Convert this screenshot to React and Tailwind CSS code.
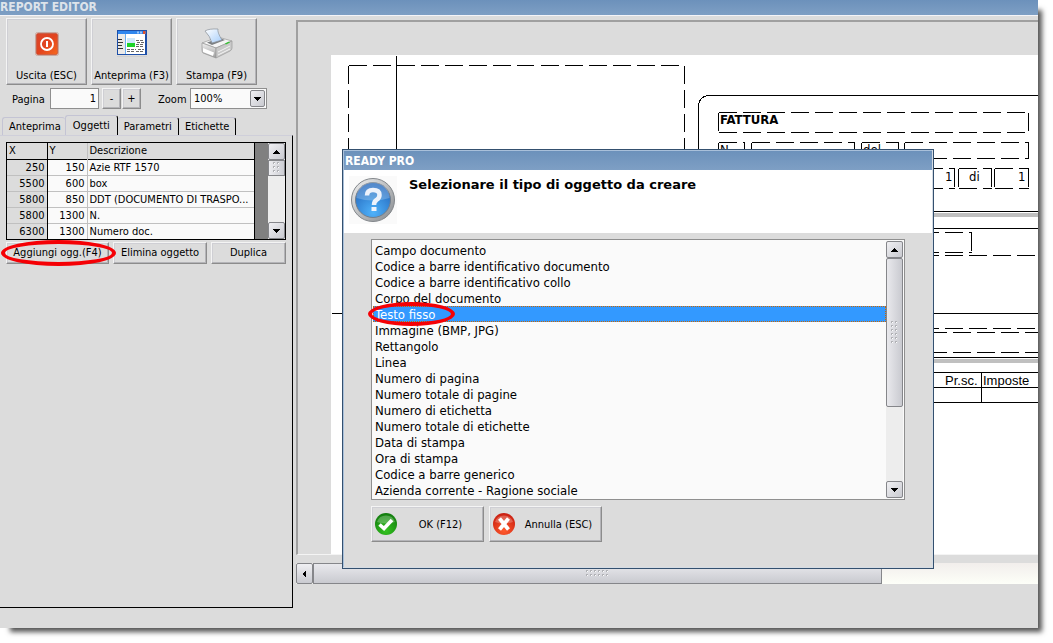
import { useState } from 'react';

const objects = [
  { x: 250, y: 150, descr: 'Azie RTF 1570' },
  { x: 5500, y: 600, descr: 'box' },
  { x: 5800, y: 850, descr: 'DDT (DOCUMENTO DI TRASPO...' },
  { x: 5800, y: 1300, descr: 'N.' },
  { x: 6300, y: 1300, descr: 'Numero doc.' },
];

const types = [
  'Campo documento',
  'Codice a barre identificativo documento',
  'Codice a barre identificativo collo',
  'Corpo del documento',
  'Testo fisso',
  'Immagine (BMP, JPG)',
  'Rettangolo',
  'Linea',
  'Numero di pagina',
  'Numero totale di pagine',
  'Numero di etichetta',
  'Numero totale di etichette',
  'Data di stampa',
  'Ora di stampa',
  'Codice a barre generico',
  'Azienda corrente - Ragione sociale',
];

const tabs = ['Anteprima', 'Oggetti', 'Parametri', 'Etichette'];

const raised = 'border border-t-[#f4f4f4] border-l-[#f4f4f4] border-r-[#8c8c8c] border-b-[#8c8c8c] shadow-[inset_-1px_-1px_0_#b4b4b8,inset_1px_1px_0_#cfcfd4] bg-[#dcdcdc]';

function PowerIcon() {
  return (
    <svg width="24" height="24" viewBox="0 0 24 24">
      <defs>
        <linearGradient id="pw" x1="0" y1="0" x2="1" y2="1">
          <stop offset="0" stopColor="#d9462c" />
          <stop offset="0.5" stopColor="#e2431e" />
          <stop offset="1" stopColor="#f6691f" />
        </linearGradient>
      </defs>
      <rect x="0.5" y="0.5" width="23" height="23" rx="2" fill="#f4e4e0" stroke="#c9a79f" />
      <rect x="1.5" y="1.5" width="21" height="21" rx="1.5" fill="url(#pw)" stroke="#b93a1e" strokeWidth="0.6" />
      <circle cx="12" cy="12" r="6" fill="none" stroke="#fff" strokeWidth="1.8" />
      <path d="M12 9v6" stroke="#fff" strokeWidth="2" />
    </svg>
  );
}

function PreviewIcon() {
  return (
    <svg width="32" height="28" viewBox="0 0 32 28">
      <rect x="1" y="0" width="30" height="25" fill="#1d4fa8" />
      <rect x="2" y="1" width="28" height="3" fill="#2f86ee" />
      <path d="M21 1.5h2v2h-2zM24 1.5h2v2h-2z" fill="#9cc6f8" />
      <path d="M27 1h2.500v3h-2.500z" fill="#e0512c" />
      <rect x="2" y="4" width="27" height="20" fill="#fff" />
      <rect x="2" y="4" width="7" height="20" fill="#eceae8" />
      <path d="M9.500 4v20" stroke="#6aaef0" />
      <path d="M2 9.500h4M2 12.500h5M2 15.500h4M2 18.500h5" stroke="#333" />
      <rect x="11" y="8" width="8" height="5" fill="#cfe8fb" />
      <rect x="11" y="13" width="8" height="4" fill="#1fd32a" />
      <path d="M20 10.500h8M21 12.500h7M20 14.500h8M20 16.500h7M11 19.500h9M22 19.500h6M11 21.500h7M20 21.500h8" stroke="#666" strokeDasharray="3 1" />
      <rect x="1" y="26" width="30" height="1" fill="#d0d0d0" />
    </svg>
  );
}

function PrinterIcon() {
  return (
    <svg width="32" height="32" viewBox="0 0 32 32">
      <defs>
        <linearGradient id="paper" x1="0" y1="0" x2="1" y2="1">
          <stop offset="0" stopColor="#fff" />
          <stop offset="1" stopColor="#a6cdfa" />
        </linearGradient>
        <linearGradient id="side" x1="0" y1="0" x2="0" y2="1">
          <stop offset="0" stopColor="#f2f2f2" />
          <stop offset="1" stopColor="#9b9b9b" />
        </linearGradient>
      </defs>
      <path d="M1 15 L17 9 L31 13 L15 20 Z" fill="#f5f5f5" stroke="#9a9a9a" strokeWidth="0.7" />
      <path d="M6 14.500 L19 10 L24 12 L11 17 Z" fill="#7d8083" />
      <path d="M4 3 Q8 .5 17 1 Q16 4 21 12 L11 15 Q9 8 4 3 Z" fill="url(#paper)" stroke="#8a9099" strokeWidth="0.7" />
      <path d="M1 15 L15 20 V30 L2 25 Q1 24 1 22 Z" fill="url(#side)" stroke="#9a9a9a" strokeWidth="0.7" />
      <path d="M15 20 L31 13 V20 Q31 22 29 23 L15 30 Z" fill="#c9c9c9" stroke="#9a9a9a" strokeWidth="0.7" />
      <path d="M2 20 L13 24.500 L12 28 L2 24 Z" fill="#fff" />
      <path d="M17 24 L29 18 M17 27 L29 21" stroke="#f4f4f4" />
      <path d="M24 15.500 L28 13.500 L29 14.500 L25 16.500 Z" fill="#35c431" />
    </svg>
  );
}

function QuestionIcon() {
  return (
    <svg width="48" height="48" viewBox="0 0 48 48">
      <defs>
        <linearGradient id="ring" x1="0" y1="0" x2="1" y2="1">
          <stop offset="0" stopColor="#f2f2f2" />
          <stop offset="1" stopColor="#85898d" />
        </linearGradient>
        <radialGradient id="ball" cx="0.5" cy="0.85" r="0.8">
          <stop offset="0" stopColor="#4fb2fa" />
          <stop offset="1" stopColor="#2468bd" />
        </radialGradient>
      </defs>
      <rect width="48" height="48" fill="#fafafa" />
      <circle cx="24" cy="24" r="21.500" fill="url(#ring)" stroke="#83878b" />
      <circle cx="24" cy="24" r="17.500" fill="url(#ball)" stroke="#747e8a" />
      <path d="M7.500 22 A16.500 16.500 0 0 1 40.500 22 Q24 27 7.500 22Z" fill="#fff" opacity="0.22" />
      <path d="M18 19.500 Q18 14 24 14 Q30.500 14 30.500 19 Q30.500 22 27.500 24 Q25 25.500 25 29" fill="none" stroke="#eef2fb" strokeWidth="4.500" />
      <rect x="22.500" y="31" width="5" height="4" fill="#eef2fb" />
    </svg>
  );
}

function OkIcon() {
  return (
    <svg width="24" height="24" viewBox="0 0 24 24">
      <defs>
        <radialGradient id="ok" cx="0.5" cy="0.8" r="0.8">
          <stop offset="0" stopColor="#35c420" />
          <stop offset="1" stopColor="#117a0e" />
        </radialGradient>
      </defs>
      <circle cx="12" cy="12" r="11" fill="url(#ok)" />
      <path d="M3 10 A9.500 9.500 0 0 1 21 10 Q12 13 3 10Z" fill="#fff" opacity="0.25" />
      <path d="M5.500 12.500 L10 16.500 L18 8" fill="none" stroke="#fff" strokeWidth="3.600" />
    </svg>
  );
}

function CancelIcon() {
  return (
    <svg width="24" height="24" viewBox="0 0 24 24">
      <defs>
        <radialGradient id="ko" cx="0.5" cy="0.8" r="0.8">
          <stop offset="0" stopColor="#ff5a2c" />
          <stop offset="1" stopColor="#c81d10" />
        </radialGradient>
      </defs>
      <circle cx="12" cy="12" r="11" fill="url(#ko)" />
      <path d="M3 10 A9.500 9.500 0 0 1 21 10 Q12 13 3 10Z" fill="#fff" opacity="0.25" />
      <path d="M7.500 6.500 L16.500 17.500 M16.500 6.500 L7.500 17.500" stroke="#fff" strokeWidth="3.800" />
    </svg>
  );
}

function Arrow({ d }) {
  return (
    <svg width="8" height="8" viewBox="0 0 8 8" shapeRendering="crispEdges">
      <path d={d} fill="#000" />
    </svg>
  );
}

const UP = 'M0 6h7L3.500 2z';
const DOWN = 'M0 2h7L3.500 6z';
const LEFT = 'M5 0v8L1 4z';

function ScrollButton({ d, label }) {
  return (
    <button aria-label={label} className="flex size-[17px] shrink-0 items-center justify-center rounded-[2px] border border-[#85868a] bg-linear-to-br from-[#f0f0f3] to-[#c9cad0]">
      <Arrow d={d} />
    </button>
  );
}

function Grip({ cols, rows }) {
  const dots = [];
  for (let r = 0; r < rows; r++) {
    for (let c = 0; c < cols; c++) dots.push([c * 4, r * 4]);
  }
  return (
    <svg width={cols * 4} height={rows * 4} shapeRendering="crispEdges">
      {dots.map(([x, y]) => (
        <g key={`${x}-${y}`}>
          <rect x={x + 1} y={y + 1} width="1" height="1" fill="#fff" />
          <rect x={x} y={y} width="2" height="1" fill="#b0b1b5" />
          <rect x={x} y={y} width="1" height="2" fill="#b0b1b5" />
        </g>
      ))}
    </svg>
  );
}

function ToolButton({ icon, label }) {
  return (
    <button className={`flex h-[67px] w-[81px] flex-col items-center justify-between pt-[9px] ${raised}`}>
      <span className="flex h-8 items-center">{icon}</span>
      <span className="leading-4 whitespace-nowrap">{label}</span>
    </button>
  );
}

function DashedBox({ x, y, x2, y2 }) {
  return <path d={`M${x} ${y}H${x2} M${x} ${y2}H${x2} M${x} ${y}V${y2} M${x2} ${y}V${y2}`} strokeDasharray="18 6" />;
}

function ReportPage() {
  return (
    <div className="relative h-full min-w-0 overflow-hidden bg-white text-[13px] leading-4">
      <svg className="absolute top-0 left-0" width="707" height="499" fill="none" stroke="#000" shapeRendering="crispEdges">
        <g transform="translate(0.5 0.5)">
          <path d="M65 0V499 M0 258H707" />
          <DashedBox x={17} y={10} x2={353} y2={240} />
          <path d="M720 40H377Q367 41 367 51V156H720" />
          <DashedBox x={387} y={57} x2={697} y2={77} />
          <DashedBox x={387} y={87} x2={413} y2={103} />
          <DashedBox x={420} y={87} x2={523} y2={103} />
          <DashedBox x={530} y={87} x2={567} y2={103} />
          <DashedBox x={573} y={87} x2={697} y2={103} />
          <DashedBox x={569} y={113} x2={623} y2={133} />
          <DashedBox x={627} y={113} x2={660} y2={133} />
          <DashedBox x={663} y={113} x2={697} y2={133} />
          <path d="M371 159H720" stroke="#c0c0c0" strokeWidth="4" />
          <path d="M367 173H720" />
          <DashedBox x={397} y={177} x2={640} y2={197} />
          <path d="M397 200H707 M397 273H707 M381 277H720 M381 297H720" strokeDasharray="18 6" />
          <path d="M371 305H720" stroke="#c0c0c0" strokeWidth="4" />
          <path d="M367 302H720 M367 317H720 M367 332H720 M367 347H720 M650 317V347" />
        </g>
      </svg>
      <span className="absolute top-[57px] left-[389px] font-bold">FATTURA</span>
      <span className="absolute top-[87px] left-[389px]">N.</span>
      <span className="absolute top-[87px] left-[532px]">del</span>
      <span className="absolute top-[114px] left-[614px]">1</span>
      <span className="absolute top-[114px] left-[638px]">di</span>
      <span className="absolute top-[114px] left-[687px]">1</span>
      <span className="absolute top-[318px] left-[614px] font-['Liberation_Sans',sans-serif]">Pr.sc.</span>
      <span className="absolute top-[318px] left-[652px] font-['Liberation_Sans',sans-serif]">Imposte</span>
    </div>
  );
}

function ObjectsPanel() {
  return (
    <div className="flex flex-1 flex-col border-t border-r border-b border-t-[#cfcfda] border-r-black border-b-black px-1.5 pt-1.5">
      <div className="flex border border-black bg-[#808080]">
        <table className="min-w-0 flex-1 table-fixed border-collapse bg-[#fafafa] leading-[15px]">
          <thead>
            <tr className="h-4 border-b border-black bg-[#dcdcdc] text-left">
              <th className="w-10 border-r border-black pl-0.5 font-normal">X</th>
              <th className="w-10 border-r border-[#c0c0c0] pl-0.5 font-normal">Y</th>
              <th className="border-r border-black pl-0.5 font-normal">Descrizione</th>
            </tr>
          </thead>
          <tbody>
            {objects.map((o) => (
              <tr key={o.descr} className="h-4 border-b border-[#c0c0c0] last:border-b-0">
                <td className="border-r border-black bg-[#dcdcdc] pr-0.5 text-right">{o.x}</td>
                <td className="border-r border-[#c0c0c0] pr-0.5 text-right">{o.y}</td>
                <td className="overflow-hidden border-r border-black pl-0.5 whitespace-nowrap">{o.descr}</td>
              </tr>
            ))}
          </tbody>
        </table>
        <div className="ml-[13px] flex w-[17px] flex-col bg-[#ededed]">
          <ScrollButton d={UP} label="Su" />
          <div className="flex h-4 items-center justify-center border border-[#85868a] bg-linear-to-r from-[#ededf0] to-[#cdced4]">
            <Grip cols={2} rows={3} />
          </div>
          <div className="flex-1" />
          <ScrollButton d={DOWN} label="Giù" />
        </div>
      </div>
      <div className="mt-0.5 flex gap-1">
        <div className="relative">
          <button className={`h-[22px] w-[103px] pt-px whitespace-nowrap ${raised}`}>Aggiungi ogg.(F4)</button>
          <span className="pointer-events-none absolute -top-0.5 -left-[5px] h-[26px] w-[115px] rounded-[50%] border-4 border-[#f50005]" />
        </div>
        <button className={`h-[22px] w-[94px] pt-px whitespace-nowrap ${raised}`}>Elimina oggetto</button>
        <button className={`h-[22px] flex-1 pt-px ${raised}`}>Duplica</button>
      </div>
    </div>
  );
}

function TypeDialog() {
  const [selected, setSelected] = useState('Testo fisso');

  return (
    <div role="dialog" aria-labelledby="dialog-title" className="absolute top-[149px] left-[342px] w-[592px] border border-[#34506f] bg-[#dcdcdc] shadow-[inset_-1px_-1px_0_#d5dce4,inset_1px_1px_0_#a9c0da]">
      <div className="m-px mb-0 h-[19px] bg-linear-to-b from-[#6c91bb] to-[#7e9fc4] pl-px text-[12px] leading-[20px] font-bold text-white">READY PRO</div>
      <div className="mx-px flex h-[63px] gap-3 bg-white pt-1.5 pl-[5px]">
        <QuestionIcon />
        <h2 id="dialog-title" className="font-['DejaVu_Sans',sans-serif] text-[13px] leading-[18px] font-bold">Selezionare il tipo di oggetto da creare</h2>
      </div>
      <div className="px-7 pt-[6px] pb-[26px]">
        <div className="flex border border-[#8f8f8f] bg-[#fafafa] p-px">
          <ul role="listbox" aria-label="Tipo di oggetto" className="min-w-0 flex-1 pt-px text-[13px] leading-[18px]">
            {types.map((t) => (
              <li
                key={t}
                role="option"
                aria-selected={t === selected}
                onClick={() => setSelected(t)}
                className={t === selected ? 'relative h-4 bg-[#3399ff] pl-0.5 text-white outline-1 -outline-offset-1 outline-dotted outline-[#cc6600]' : 'h-4 pl-0.5'}
              >
                {t}
                {t === selected && <span className="pointer-events-none absolute -top-1 -left-[5px] h-6 w-[87px] rounded-[50%] border-4 border-[#f50005]" />}
              </li>
            ))}
          </ul>
          <div className="flex w-[17px] flex-col bg-[#ededed]">
            <ScrollButton d={UP} label="Su" />
            <div className="flex h-[149px] items-center justify-center rounded-[2px] border border-[#85868a] bg-linear-to-r from-[#e9e9ed] to-[#c9cad0]">
              <Grip cols={2} rows={6} />
            </div>
            <div className="flex-1" />
            <ScrollButton d={DOWN} label="Giù" />
          </div>
        </div>
        <div className="mt-1.5 flex gap-[5px] text-[11px]">
          <button className={`flex h-[36px] w-[113px] items-center pl-0.5 ${raised}`}>
            <OkIcon />
            <span className="flex-1 pt-0.5 text-center">OK (F12)</span>
          </button>
          <button className={`flex h-[36px] w-[113px] items-center pl-0.5 ${raised}`}>
            <CancelIcon />
            <span className="flex-1 pt-0.5 text-center whitespace-nowrap">Annulla (ESC)</span>
          </button>
        </div>
      </div>
    </div>
  );
}

function App() {
  const [tab, setTab] = useState('Oggetti');
  const [page, setPage] = useState('1');

  return (
    <div className="h-screen overflow-hidden bg-white pr-[15px] pb-[15px] font-['DejaVu_Sans_Condensed','DejaVu_Sans',sans-serif] text-[11px] text-black">
      <div className="relative flex h-full flex-col bg-[#dcdcdc] shadow-[7px_7px_5px_-3px_#555]">
        <h1 className="h-4 shrink-0 border-b border-[#f4f4f8] bg-linear-to-b from-[#6c91bb] to-[#7e9fc4] text-[12px] leading-[15px] font-bold text-[#dde3ea]">REPORT EDITOR</h1>
        <div className="flex min-h-0 flex-1">
          <aside className="flex w-[293px] shrink-0 flex-col pt-0.5 pb-5">
            <div className="flex gap-1 pl-1.5">
              <ToolButton icon={<PowerIcon />} label="Uscita (ESC)" />
              <ToolButton icon={<PreviewIcon />} label="Anteprima (F3)" />
              <ToolButton icon={<PrinterIcon />} label="Stampa (F9)" />
            </div>
            <div className="mt-[3px] flex h-[21px] items-center pl-3 leading-[18px]">
              <label htmlFor="page" className="w-[38px] pt-0.5">Pagina</label>
              <input id="page" value={page} onChange={(e) => setPage(e.target.value)} className="h-[21px] w-[49px] border border-[#8f8f8f] bg-[#fafafa] pr-0.5 text-right" />
              <button className={`ml-[3px] h-[21px] w-[19px] ${raised}`}>-</button>
              <button className={`ml-px h-[21px] w-[19px] ${raised}`}>+</button>
              <label htmlFor="zoom" className="ml-[17px] w-8 pt-0.5">Zoom</label>
              <div className="relative">
                <select id="zoom" defaultValue="100%" className="block h-[21px] w-[77px] appearance-none border border-[#8f8f8f] bg-[#fafafa] pt-px pl-[3px]">
                  <option>50%</option>
                  <option>100%</option>
                  <option>200%</option>
                </select>
                <span className="pointer-events-none absolute top-0.5 right-0.5 flex h-[17px] w-[15px] items-center justify-center rounded-[2px] border border-[#85868a] bg-linear-to-br from-[#f0f0f3] to-[#c9cad0]">
                  <Arrow d={DOWN} />
                </span>
              </div>
            </div>
            <div role="tablist" className="mt-1.5 flex h-5 items-end pl-0.5 leading-4">
              {tabs.map((t) => (
                <button
                  key={t}
                  role="tab"
                  aria-selected={t === tab}
                  onClick={() => setTab(t)}
                  className={t === tab
                    ? 'h-5 rounded-t-[3px] border-t border-r border-l border-t-[#c4c4d4] border-l-[#c4c4d4] border-r-black px-[7px]'
                    : 'h-[18px] rounded-t-[3px] border-t border-r border-t-[#c4c4d4] border-r-black px-1.5 pt-px first:border-r-0 first:border-l first:border-l-[#c4c4d4] first:pr-1'}
                >
                  {t}
                </button>
              ))}
            </div>
            <ObjectsPanel />
          </aside>
          <main className="flex min-w-0 flex-1 flex-col pt-1 pb-[44px] pl-[3px]">
            <div className="min-h-0 flex-1 border-t-2 border-b border-l-2 border-t-[#a0a0a0] border-b-[#f4f4f4] border-l-[#a0a0a0] pt-[33px] pl-[33px]">
              <ReportPage />
            </div>
            <div className="mt-2 flex h-[21px] bg-linear-to-b from-[#f2eeec] to-[#fdfff8]">
              <button aria-label="Sinistra" className="flex w-[17px] items-center justify-center rounded-[2px] border border-[#85868a] bg-linear-to-b from-[#f0f0f3] to-[#c9cad0]">
                <Arrow d={LEFT} />
              </button>
              <div className="mr-[156px] flex flex-1 items-center justify-center border border-[#85868a] bg-linear-to-b from-[#e9e9ed] to-[#c9cad0]">
                <Grip cols={6} rows={2} />
              </div>
            </div>
          </main>
        </div>
        <TypeDialog />
      </div>
    </div>
  );
}

export default App;
